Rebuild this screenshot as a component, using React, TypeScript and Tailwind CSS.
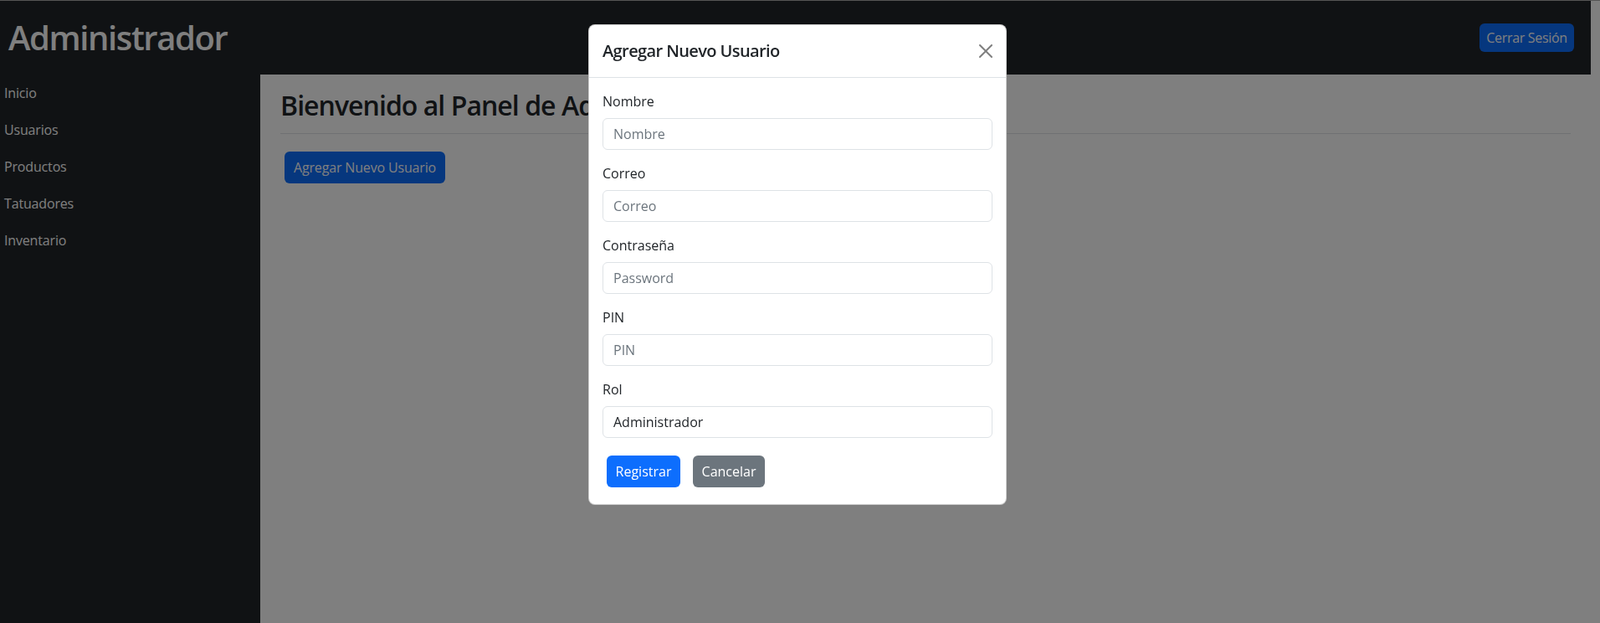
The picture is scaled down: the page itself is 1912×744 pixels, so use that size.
import { useState } from 'react'

const NAV = ['Inicio', 'Usuarios', 'Productos', 'Tatuadores', 'Inventario']

const FIELDS = [
  { label: 'Nombre', placeholder: 'Nombre', type: 'text' },
  { label: 'Correo', placeholder: 'Correo', type: 'email' },
  { label: 'Contraseña', placeholder: 'Password', type: 'password' },
  { label: 'PIN', placeholder: 'PIN', type: 'text' },
]

function CloseIcon() {
  return (
    <svg width="16" height="16" viewBox="0 0 16 16" aria-hidden>
      <path
        fill="#000"
        fillOpacity="0.5"
        d="M.293.293a1 1 0 0 1 1.414 0L8 6.586 14.293.293a1 1 0 1 1 1.414 1.414L9.414 8l6.293 6.293a1 1 0 0 1-1.414 1.414L8 9.414l-6.293 6.293a1 1 0 0 1-1.414-1.414L6.586 8 .293 1.707a1 1 0 0 1 0-1.414z"
      />
    </svg>
  )
}

function UserModal() {
  const [rol, setRol] = useState('Administrador')

  return (
    <div className="absolute left-[703px] top-[29px] w-[500px] rounded-[8px] border border-black/20 bg-white text-[#212529]">
      {/* cabecera */}
      <div className="flex h-[63px] items-center justify-between border-b border-[#dee2e6] px-4">
        <h5 className="text-[20px] font-semibold leading-[30px] tracking-[-0.03em]">Agregar Nuevo Usuario</h5>
        <button className="flex h-4 w-4 items-center justify-center">
          <CloseIcon />
        </button>
      </div>

      {/* formulario */}
      <form className="px-4 pt-4 pb-4" onSubmit={(e) => e.preventDefault()}>
        {FIELDS.map((f) => (
          <div key={f.label} className="mb-4">
            <label className="mb-2 block text-[16px] leading-6">{f.label}</label>
            <input
              type={f.type}
              placeholder={f.placeholder}
              className="block h-[38px] w-full rounded-[6px] border border-[#dee2e6] px-3 text-[16px] text-[#212529] outline-none placeholder:text-[#6c757d]"
            />
          </div>
        ))}
        <div className="mb-4">
          <label className="mb-2 block text-[16px] leading-6">Rol</label>
          <input
            value={rol}
            onChange={(e) => setRol(e.target.value)}
            className="block h-[38px] w-full rounded-[6px] border border-[#dee2e6] px-3 text-[16px] text-[#212529] outline-none"
          />
        </div>
        <div className="flex gap-[15px] pt-[5px] pb-[4px] pl-[5px]">
          <button className="h-[38px] w-[88px] rounded-[6px] bg-[#0d6efd] text-[16px] text-white">Registrar</button>
          <button className="h-[38px] w-[86px] rounded-[6px] bg-[#6c757d] text-[16px] text-white">Cancelar</button>
        </div>
      </form>
    </div>
  )
}

export default function App() {
  return (
    <div className="relative h-screen overflow-hidden bg-white font-['Open_Sans','Noto_Sans',sans-serif] text-[#212529]">
      <div className="flex h-full flex-col border-t border-[#aaaaaa]">
        <header className="flex h-[88px] w-[1901px] shrink-0 items-center justify-between bg-[#212529] pl-[10px] pr-[20px]">
          <h1 className="text-[40px] font-semibold leading-[48px] tracking-[-0.035em] text-white">Administrador</h1>
          <button className="h-[34px] w-[113px] rounded-[6px] bg-[#0d6efd] text-[16px] tracking-[-0.02em] text-white">
            Cerrar Sesión
          </button>
        </header>

        <div className="flex min-h-0 flex-1">
          <aside className="w-[311px] shrink-0 bg-[#212529]">
            <nav className="flex flex-col">
              {NAV.map((item) => (
                <a key={item} href="#" className="px-[5px] py-[10px] text-[16px] leading-6 tracking-[-0.01em] text-white">
                  {item}
                </a>
              ))}
            </nav>
          </aside>

          <main className="w-[1590px] px-6 pt-[18px]">
            <h2 className="text-[32px] font-semibold leading-[38px] tracking-[-0.03em]">
              Bienvenido al Panel de Administración
            </h2>
            <hr className="mt-[14px] border-t border-[#dee2e6]" />
            <button className="mt-[21px] ml-[5px] h-[38px] w-[192px] rounded-[6px] bg-[#0d6efd] text-[16px] tracking-[-0.01em] text-white">
              Agregar Nuevo Usuario
            </button>
          </main>
        </div>
      </div>

      {/* fondo del modal */}
      <div className="fixed inset-0 bg-black/50">
        <UserModal />
      </div>
    </div>
  )
}
